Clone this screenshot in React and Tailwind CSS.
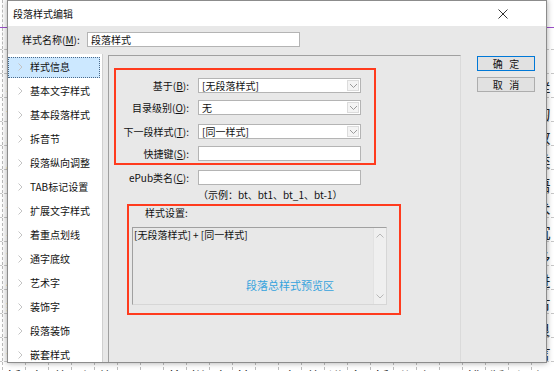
import React from "react";

const F = "font-['Noto_Sans_CJK_SC',sans-serif]";

const docRows = [
  "", "", "",
  "【在段落样式编辑中可以设置基于样式目录级别下一段样式快捷键等内容并预览效果】",
  "白话文排版中段落样式的设置非常重要可以统一整本书的版式风格与阅读体验的效果好",
  "力求段落纵向调整与文字样式配合使用达到最佳的排版效果和阅读舒适度进行设置和预览",
  "出版物中常用的段落样式包括正文标题引文注释等多种类型可根据需要进行设置和调整样",
  "泣涕零如雨河汉清且浅相去复几许盈盈一水间脉脉不得语段落样式编辑中可以设置相关",
  "会议记录文字样式扩展文字样式着重点划线通字底纹艺术字装饰字段落装饰嵌套样式等等",
  "扌手中的书本翻到最后一页才发现故事早已结束而我还沉浸在其中久久不能自拔的感受",
  "中文排版的基本规则包括标点挤压避头尾行距字距等诸多方面需要细致调整才能达到效果",
  "3段落样式可以继承基于样式的所有属性并在此基础上进行修改和扩展以满足不同需要",
  "纟经过多次修改终于完成了这本书的排版工作每一个细节都经过了反复推敲和仔细校对",
  "记录下每一次修改的内容以便日后查阅和参考这是一个良好的工作习惯值得大家学习借鉴",
  "斿子吟慈母手中线游子身上衣临行密密缝意恐迟迟归谁言寸草心报得三春晖段落样式",
  "扌拆音节功能可以将拼音按照音节进行拆分便于排版和阅读这在儿童读物中非常常用的",
  "亻使用段落样式可以大大提高排版效率减少重复劳动保证整本书风格统一协调美观大方",
];

function DocRow({ text, h }) {
  const chars = Array.from(text.padEnd(26, " ")).slice(0, 26);
  return (
    <div className={`flex ml-[-21px] ${h} border-b border-dashed border-[#c8c8c8]`}>
      {chars.map((c, i) => (
        <div
          key={i}
          className="w-[23px] shrink-0 border-l border-dashed border-[#bdbdbd] flex items-center justify-center text-[15px] leading-none text-[#222] pt-[6px]"
        >
          {c}
        </div>
      ))}
    </div>
  );
}

function Chevron({ className = "" }) {
  return (
    <svg width="5" height="8" viewBox="0 0 5 8" className={className}>
      <polyline points="0.5,0.5 4,4 0.5,7.5" fill="none" stroke="#c4c4c4" strokeWidth="1" />
    </svg>
  );
}

function DownArrow() {
  return (
    <svg width="9" height="6" viewBox="0 0 9 6">
      <polyline points="1,1 4.5,4.5 8,1" fill="none" stroke="#9a9a9a" strokeWidth="1" />
    </svg>
  );
}

function Select({ value }) {
  return (
    <div className="w-[163px] h-[15px] bg-white border border-[#b4b4b4] flex items-center">
      <div className="flex-1 pl-[3px] text-[10px] leading-none text-[#111]">{value}</div>
      <div className="w-[12px] h-[11px] mr-[1px] border border-[#dcdcdc] bg-[#f4f4f4] flex items-center justify-center">
        <DownArrow />
      </div>
    </div>
  );
}

function Input({ w = "w-[163px]" }) {
  return <div className={`${w} h-[15px] bg-white border border-[#b4b4b4]`} />;
}

function FormRow({ label, children, mt }) {
  return (
    <div className={`flex items-center ${mt}`}>
      <div className="w-[73px] text-right text-[10px] leading-none text-[#111] whitespace-nowrap">{label}</div>
      <div className="ml-[9px]">{children}</div>
    </div>
  );
}

const listItems = [
  "样式信息",
  "基本文字样式",
  "基本段落样式",
  "拆音节",
  "段落纵向调整",
  "TAB标记设置",
  "扩展文字样式",
  "着重点划线",
  "通字底纹",
  "艺术字",
  "装饰字",
  "段落装饰",
  "嵌套样式",
];

export default function App() {
  return (
    <div className={`relative w-[554px] h-[371px] overflow-hidden bg-white ${F}`}>
      {/* background document */}
      <div className="flex flex-col">
        <div className="h-[28px] border-b border-[#9b4fc9] flex ml-[-21px]">
          {Array.from({ length: 26 }).map((_, i) => (
            <div key={i} className="w-[23px] shrink-0 border-l border-dashed border-[#bdbdbd]" />
          ))}
        </div>
        <DocRow text="" h="h-[22px]" />
        <DocRow text="" h="h-[24px]" />
        {docRows.slice(3).map((t, i) => (
          <DocRow key={i} text={t} h="h-[24px]" />
        ))}
      </div>

      {/* dialog */}
      <div className="absolute left-[7px] top-0 w-[540px] h-[363px] bg-[#e8e8e8] border border-[#8c8c8c] shadow-[0_0_6px_rgba(0,0,0,0.35)] flex flex-col">
        {/* title bar */}
        <div className="h-[25px] bg-white flex items-center justify-between pl-[5px] pr-[38px] shrink-0">
          <span className="text-[10px] leading-none text-[#111]">段落样式编辑</span>
          <svg width="10" height="10" viewBox="0 0 10 10">
            <path d="M0.5 0.5 L9.5 9.5 M9.5 0.5 L0.5 9.5" stroke="#333" strokeWidth="1" />
          </svg>
        </div>

        {/* name row */}
        <div className="h-[28px] flex items-center pl-[14px] pb-[1px] shrink-0">
          <div className="w-[65px] text-[10px] leading-none text-[#111] whitespace-nowrap">
            样式名称(<u>M</u>):
          </div>
          <div className="w-[213px] h-[15px] bg-white border border-[#b4b4b4] flex items-center pl-[3px] text-[10px] leading-none text-[#111]">
            段落样式
          </div>
        </div>

        {/* main */}
        <div className="flex flex-1 min-h-0">
          {/* list */}
          <div className="w-[95px] bg-white border-r border-[#d0d0d0] pt-[1px] flex flex-col">
            {listItems.map((t, i) => (
              <div key={i} className="h-[24px] flex items-center shrink-0">
                {i === 0 ? (
                  <div className="w-[92px] h-[21px] ml-[0px] bg-[#cce8ff] border border-dotted border-[#4a6a8a] flex items-center">
                    <Chevron className="ml-[9px]" />
                    <span className="ml-[7px] text-[10px] leading-none text-[#111]">{t}</span>
                  </div>
                ) : (
                  <div className="flex items-center">
                    <Chevron className="ml-[10px]" />
                    <span className="ml-[7px] text-[10px] leading-none text-[#111]">{t}</span>
                  </div>
                )}
              </div>
            ))}
          </div>

          {/* panel */}
          <div className="ml-[5px] mt-[1px] w-[353px] border-t border-l border-[#a0a0a0] border-r border-r-[#dadada] flex flex-col">
            {/* red box 1 */}
            <div className="ml-[5px] mt-[12px] w-[262px] h-[97px] border-2 border-[#ff3b1e] flex flex-col">
              <FormRow label={<>基于(<u>B</u>):</>} mt="mt-[8px]">
                <Select value="[无段落样式]" />
              </FormRow>
              <FormRow label={<>目录级别(<u>O</u>):</>} mt="mt-[7px]">
                <Select value="无" />
              </FormRow>
              <FormRow label={<>下一段样式(<u>T</u>):</>} mt="mt-[9px]">
                <Select value="[同一样式]" />
              </FormRow>
              <FormRow label={<>快捷键(<u>S</u>):</>} mt="mt-[7px]">
                <Input />
              </FormRow>
            </div>

            {/* ePub row */}
            <div className="flex items-center mt-[5px]">
              <div className="w-[80px] text-right text-[10px] leading-none text-[#111] whitespace-nowrap">
                ePub类名(<u>C</u>):
              </div>
              <div className="ml-[9px]">
                <Input />
              </div>
            </div>
            <div className="ml-[89px] mt-[5px] text-[10px] leading-none text-[#111] whitespace-nowrap">
              （示例：bt、bt1、bt_1、bt-1）
            </div>

            {/* red box 2 */}
            <div className="ml-[18px] mt-[4px] w-[274px] h-[111px] border-2 border-[#ff3b1e] flex flex-col">
              <div className="pl-[16px] pt-[2px] text-[10px] leading-none text-[#111]">样式设置:</div>
              <div className="ml-[3px] mt-[9px] w-[255px] h-[78px] border border-[#a0a0a0] border-r-[#d6d6d6] border-b-[#d6d6d6] flex">
                <div className="flex-1 flex flex-col">
                  <div className="pl-[1px] pt-[2px] text-[10px] leading-none text-[#111] whitespace-nowrap">
                    [无段落样式] + [同一样式]
                  </div>
                  <div className="mt-auto mb-[13px] pl-[113px] text-[11px] leading-none text-[#36a3dd] whitespace-nowrap">
                    段落总样式预览区
                  </div>
                </div>
                <div className="w-[13px] bg-[#efefef] border-l border-[#e2e2e2] flex flex-col items-center justify-between py-[5px]">
                  <svg width="8" height="5" viewBox="0 0 8 5">
                    <polyline points="0.5,4.5 4,1 7.5,4.5" fill="none" stroke="#b8b8b8" strokeWidth="1" />
                  </svg>
                  <svg width="8" height="5" viewBox="0 0 8 5">
                    <polyline points="0.5,0.5 4,4 7.5,0.5" fill="none" stroke="#b8b8b8" strokeWidth="1" />
                  </svg>
                </div>
              </div>
            </div>
          </div>

          {/* buttons */}
          <div className="ml-[16px] mt-[2px] flex flex-col gap-[6px]">
            <div className="w-[58px] h-[15px] bg-[#e1e1e1] border-[1.5px] border-[#0078d7] flex items-center justify-center text-[10px] leading-none text-[#111]">
              确&nbsp;&nbsp;&nbsp;定
            </div>
            <div className="w-[58px] h-[15px] bg-[#e1e1e1] border border-[#adadad] flex items-center justify-center text-[10px] leading-none text-[#111]">
              取&nbsp;&nbsp;&nbsp;消
            </div>
          </div>
        </div>
      </div>
    </div>
  );
}
